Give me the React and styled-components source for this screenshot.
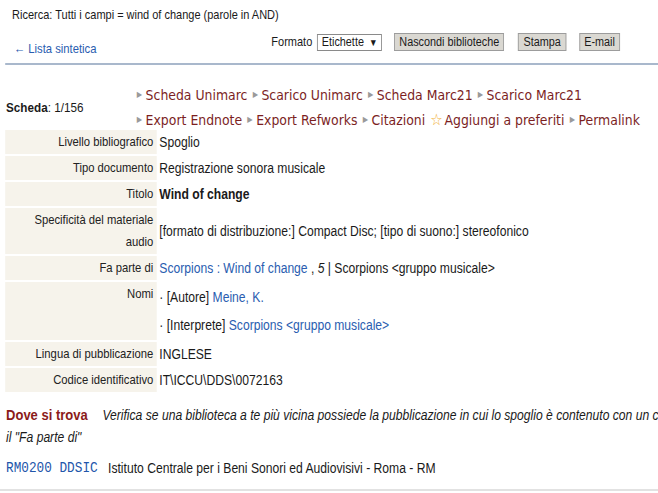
import styled, { createGlobalStyle } from "styled-components"

const GlobalStyle = createGlobalStyle`
html, body {
  margin: 0;
  padding: 0;
  overflow: hidden;
  background: #ffffff;
}
body {
  font-family: "Liberation Sans", Arial, sans-serif;
  color: #1a1a1a;
}
`

// the catalogue page is rendered in a narrowed view
const Page = styled.div`
width: 760px;
transform: scaleX(0.866);
transform-origin: 0 0;
`
const SearchLine = styled.div`
padding: 8px 0 0 14px;
font-size: 12.7px;
line-height: 14px;
`
const Toolbar = styled.div`
display: flex;
justify-content: space-between;
align-items: flex-start;
padding: 11px 44px 0 10px;
height: 30px;
margin-left: 6px;
border-bottom: 2px solid #a9b8cc;
`
const BackLink = styled.a`
color: #2a5db0;
font-size: 13px;
line-height: 15px;
margin-top: 8px;
text-decoration: none;
`
const Actions = styled.div`
display: flex;
align-items: center;
`
const FormatLabel = styled.span`
font-size: 12.7px;
margin-right: 5px;
`
const Select = styled.div`
display: flex;
align-items: center;
height: 15px;
padding: 0 4px 0 5px;
border: 1px solid #8a8a8a;
background: #fff;
font-size: 12.5px;
margin-right: 14px;
`
const Arrow = styled.span`
font-size: 10px;
margin-left: 6px;
`
const Button = styled.button`
font-family: "Liberation Sans", Arial, sans-serif;
font-size: 12.5px;
height: 18px;
padding: 0 5px;
border: 1px solid #9c9c9c;
background: #dad8d2;
color: #1a1a1a;
margin-left: ${props => props.gap || 0}px;
line-height: 15px;
`
const RecordHead = styled.div`
display: flex;
align-items: center;
padding: 20px 0 0 7px;
`
const Counter = styled.div`
width: 151px;
font-size: 13.5px;
`
const Links = styled.div`
display: flex;
flex-wrap: wrap;
width: 600px;
column-gap: 6px;
row-gap: 5px;
`
const LinkItem = styled.a`
display: flex;
align-items: center;
font-family: "DejaVu Sans", Verdana, sans-serif;
font-size: 14.4px;
line-height: 20px;
color: #7c1f1f;
text-decoration: none;
white-space: nowrap;
`
const Marker = styled.span`
font-size: 8px;
color: #9a9a9a;
margin-right: 4px;
`
const Star = styled.span`
font-size: 16px;
color: #f2b035;
margin-right: 2px;
`
const Table = styled.table`
margin: -2px 0 0 4px;
border-spacing: 2px;
`
const Label = styled.td`
width: 167px;
background: #f6f3eb;
text-align: right;
vertical-align: ${props => props.top ? "top" : "middle"};
font-size: 13px;
line-height: 22px;
padding: 1px 4px;
color: #222;
`
const Value = styled.td`
font-size: 14px;
line-height: 22px;
padding: 1px 1px;
font-weight: ${props => props.bold ? "bold" : "normal"};
`
const NameLine = styled.div`
line-height: 28px;
`
const BlueLink = styled.a`
color: #2a5db0;
text-decoration: none;
`
const Where = styled.div`
width: 900px;
padding: 10px 0 0 7px;
font-size: 14px;
line-height: 22px;
`
const WhereTitle = styled.span`
color: #8b1a1a;
font-weight: bold;
font-size: 15px;
margin-right: 17px;
`
const WhereNote = styled.i`
color: #1a1a1a;
`
const Holding = styled.div`
display: flex;
align-items: center;
height: 20px;
padding: 10px 0 11px 7px;
font-size: 14px;
border-bottom: 2px solid #e2e2e2;
`
const Code = styled.span`
font-family: "Liberation Mono", "Courier New", monospace;
font-size: 14.7px;
color: #2255aa;
margin-right: 12px;
`

const links = [
  "Scheda Unimarc", "Scarico Unimarc", "Scheda Marc21", "Scarico Marc21",
  "Export Endnote", "Export Refworks", "Citazioni", "*Aggiungi a preferiti", "Permalink",
]

export default function App() {
  return (
    <Page>
      <GlobalStyle />
      <SearchLine>Ricerca: Tutti i campi = wind of change (parole in AND)</SearchLine>
      <Toolbar>
        <BackLink>← Lista sintetica</BackLink>
        <Actions>
          <FormatLabel>Formato</FormatLabel>
          <Select>Etichette<Arrow>▼</Arrow></Select>
          <Button>Nascondi biblioteche</Button>
          <Button gap={16}>Stampa</Button>
          <Button gap={15}>E-mail</Button>
        </Actions>
      </Toolbar>
      <RecordHead>
        <Counter><b>Scheda</b>: 1/156</Counter>
        <Links>
          {links.map(l => (
            <LinkItem key={l}>
              {l.startsWith("*") ? <Star>☆</Star> : <Marker>▶</Marker>}
              {l.replace("*", "")}
            </LinkItem>
          ))}
        </Links>
      </RecordHead>
      <Table>
        <tbody>
          <tr><Label>Livello bibliografico</Label><Value>Spoglio</Value></tr>
          <tr><Label>Tipo documento</Label><Value>Registrazione sonora musicale</Value></tr>
          <tr><Label>Titolo</Label><Value bold>Wind of change</Value></tr>
          <tr><Label>Specificità del materiale audio</Label><Value>[formato di distribuzione:] Compact Disc; [tipo di suono:] stereofonico</Value></tr>
          <tr>
            <Label>Fa parte di</Label>
            <Value><BlueLink>Scorpions : Wind of change</BlueLink> , <i>5</i> | Scorpions &lt;gruppo musicale&gt;</Value>
          </tr>
          <tr>
            <Label top>Nomi</Label>
            <Value>
              <NameLine>· [Autore] <BlueLink>Meine, K.</BlueLink></NameLine>
              <NameLine>· [Interprete] <BlueLink>Scorpions &lt;gruppo musicale&gt;</BlueLink></NameLine>
            </Value>
          </tr>
          <tr><Label>Lingua di pubblicazione</Label><Value>INGLESE</Value></tr>
          <tr><Label>Codice identificativo</Label><Value>IT\ICCU\DDS\0072163</Value></tr>
        </tbody>
      </Table>
      <Where>
        <WhereTitle>Dove si trova</WhereTitle>
        <WhereNote>Verifica se una biblioteca a te più vicina possiede la pubblicazione in cui lo spoglio è contenuto con un clic su<br />il "Fa parte di"</WhereNote>
      </Where>
      <Holding>
        <Code>RM0200 DDSIC</Code>
        Istituto Centrale per i Beni Sonori ed Audiovisivi - Roma - RM
      </Holding>
    </Page>
  )
}
